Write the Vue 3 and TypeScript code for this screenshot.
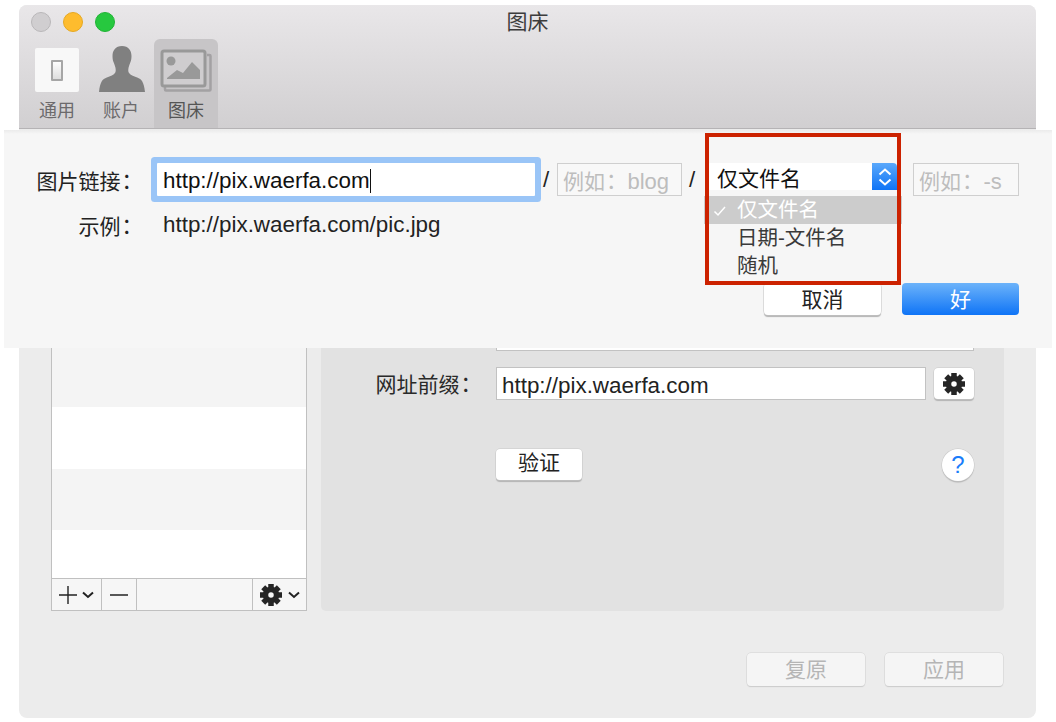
<script setup lang="ts">
const teeth = [0, 45, 90, 135, 180, 225, 270, 315]
const rows = ['a', 'b', 'c', 'd', 'e', 'f']
const menu = ['仅文件名', '日期-文件名', '随机']
</script>

<template>
  <div class="page">
    <div class="window">
      <header class="titlebar">
        <div class="title-row">
          <div class="lights">
            <span class="light grey"></span>
            <span class="light amber"></span>
            <span class="light green"></span>
          </div>
          <div class="title">图床</div>
        </div>
        <div class="tabs">
          <div class="tab">
            <div class="tab-icon">
              <div class="switch-tile"><span class="switch"></span></div>
            </div>
            <span class="tab-label">通用</span>
          </div>
          <div class="tab">
            <div class="tab-icon person">
              <svg width="46" height="46" viewBox="0 0 46 46">
                <path d="M23 0c-6.500 0-9.500 4.500-9.500 10 0 3 .5 5 1.400 7 .6 1.400 1.100 3 1.500 4.500.3 1.400.6 3.500-.1 5-1.400 2.500-5 3.500-8.500 5C3.500 33 1 36 0 46h46c-1-10-3.500-13-7.800-14.500-3.500-1.500-7.100-2.500-8.500-5-.7-1.500-.4-3.600-.1-5 .4-1.500.9-3.100 1.500-4.500.9-2 1.400-4 1.400-7C32.500 4.500 29.500 0 23 0z" fill="#808080" />
              </svg>
            </div>
            <span class="tab-label">账户</span>
          </div>
          <div class="tab active">
            <div class="tab-icon">
              <svg width="52" height="44" viewBox="0 0 52 44">
                <path d="M47 7h2.500a1 1 0 0 1 1 1v33.500a1 1 0 0 1-1 1H6a1 1 0 0 1-1-1V39" fill="none" stroke="#a3a1a3" stroke-width="2.500" />
                <rect x="2" y="3" width="43" height="35" rx="2" fill="#cfcdcf" stroke="#999" stroke-width="3" />
                <circle cx="11" cy="13" r="4.500" fill="#999" />
                <path d="M7 30l10-8 6 3 9-11 8 8v9H7z" fill="#999" />
              </svg>
            </div>
            <span class="tab-label">图床</span>
          </div>
        </div>
      </header>

      <section class="body">
        <div class="main">
          <div class="list">
            <div class="rows">
              <div v-for="r in rows" :key="r" class="row"></div>
            </div>
            <div class="list-bar">
              <div class="seg seg-add">
                <svg width="20" height="20" viewBox="0 0 20 20">
                  <path d="M10 1v18M1 10h18" stroke="#222" stroke-width="1.400" fill="none" />
                </svg>
                <svg class="chev" width="12" height="8" viewBox="0 0 12 8">
                  <path d="M1 1.500l5 4.500 5-4.500" stroke="#222" stroke-width="2" fill="none" />
                </svg>
              </div>
              <div class="seg seg-remove">
                <svg width="20" height="4" viewBox="0 0 20 4">
                  <path d="M1 2h18" stroke="#222" stroke-width="1.400" fill="none" />
                </svg>
              </div>
              <div class="seg seg-blank"></div>
              <div class="seg seg-gear">
                <svg width="24" height="24" viewBox="0 0 24 24">
                  <circle cx="12" cy="12" r="5.500" fill="none" stroke="#252525" stroke-width="5.500" />
                  <rect v-for="t in teeth" :key="t" x="9.250" y="1" width="5.500" height="5" fill="#252525" :transform="`rotate(${t} 12 12)`" />
                </svg>
                <svg class="chev" width="12" height="8" viewBox="0 0 12 8">
                  <path d="M1 1.500l5 4.500 5-4.500" stroke="#222" stroke-width="2" fill="none" />
                </svg>
              </div>
            </div>
          </div>
          <div class="panel">
            <div class="field-row">
              <span class="field-label"></span>
              <div class="field field-full"></div>
            </div>
            <div class="field-row prefix-row">
              <span class="field-label">网址前缀<span class="colon">：</span></span>
              <div class="field field-prefix">http://pix.waerfa.com</div>
              <button class="btn gear-btn">
                <svg width="24" height="24" viewBox="0 0 24 24">
                  <circle cx="12" cy="12" r="5.500" fill="none" stroke="#252525" stroke-width="5.500" />
                  <rect v-for="t in teeth" :key="t" x="9.250" y="1" width="5.500" height="5" fill="#252525" :transform="`rotate(${t} 12 12)`" />
                </svg>
              </button>
            </div>
            <div class="field-row verify-row">
              <span class="field-label"></span>
              <button class="btn verify">验证</button>
              <span class="help">?</span>
            </div>
          </div>
        </div>
        <footer class="footer">
          <button class="btn disabled">复原</button>
          <button class="btn disabled">应用</button>
        </footer>
      </section>
    </div>

    <div class="sheet">
      <div class="sheet-row first">
        <span class="sheet-label">图片链接<span class="colon">：</span></span>
        <div class="url-input">http://pix.waerfa.com<i class="caret"></i></div>
        <span class="slash">/</span>
        <div class="ph-input blog">例如<span class="colon">：</span><span class="lat">blog</span></div>
        <span class="slash second-slash">/</span>
        <div class="select">
          <span class="select-text">仅文件名</span>
          <span class="stepper">
            <svg width="14" height="24" viewBox="0 0 14 24">
              <path d="M1.500 9.500L7 4.500l5.500 5M1.500 14.500L7 19.500l5.500-5" stroke="#fff" stroke-width="2" fill="none" />
            </svg>
          </span>
          <div class="menu">
            <div v-for="(m, i) in menu" :key="m" class="menu-item" :class="{ selected: i === 0 }">
              <svg v-if="i === 0" class="check" width="14" height="12" viewBox="0 0 14 12">
                <path d="M1.500 6.500l3.500 3.500 7-8" stroke="#fff" stroke-width="1.500" fill="none" />
              </svg>
              {{ m }}
            </div>
          </div>
        </div>
        <div class="ph-input suffix">例如<span class="colon">：</span><span class="lat">-s</span></div>
      </div>
      <div class="sheet-row second">
        <span class="sheet-label">示例<span class="colon">：</span></span>
        <span class="sample">http://pix.waerfa.com/pic.jpg</span>
      </div>
      <div class="sheet-actions">
        <button class="btn cancel">取消</button>
        <button class="btn ok">好</button>
      </div>
      <div class="annotation"></div>
    </div>
  </div>
</template>

<style>
html, body { margin: 0; background: #fff; }
</style>

<style scoped>
* { box-sizing: border-box; }
.page {
  position: relative;
  width: 1056px;
  height: 722px;
  overflow: hidden;
  padding: 5px 20px 4px 19px;
  background: #fff;
  font-family: "Liberation Sans", "Noto Sans CJK SC", sans-serif;
  color: #222;
}
.window {
  display: flex;
  flex-direction: column;
  height: 713px;
  border-radius: 8px;
  overflow: hidden;
  background: #ececec;
}
.titlebar {
  height: 124px;
  flex: none;
  background: linear-gradient(#e9e7e9, #d1cfd1);
  border-bottom: 1px solid #b5b3b5;
}
.title-row { position: relative; height: 34px; }
.lights { position: absolute; left: 12px; top: 7px; display: flex; gap: 12px; }
.light { width: 20px; height: 20px; border-radius: 50%; }
.grey { background: #d0ced0; border: 1px solid #b9b7b9; }
.amber { background: #febc2e; border: 1px solid #e5a823; }
.green { background: #27c83f; border: 1px solid #20b335; }
.title { text-align: center; font-size: 21px; line-height: 34px; color: #3c3c3c; }
.tabs { display: flex; padding-left: 6px; }
.tab {
  width: 64px;
  height: 89px;
  border-radius: 6px 6px 0 0;
  display: flex;
  flex-direction: column;
  align-items: center;
}
.tab.active { background: #c7c5c7; margin-left: 1px; }
.tab-icon { height: 53px; display: flex; align-items: flex-end; justify-content: center; }
.person { padding-left: 2px; }
.tab-label { font-size: 18px; line-height: 22px; margin-top: 8px; color: #6c6a6c; }
.active .tab-label { color: #555; }
.switch-tile {
  width: 44px;
  height: 44px;
  background: #f8f8f8;
  border-radius: 2px;
  display: flex;
  align-items: center;
  justify-content: center;
}
.switch {
  width: 12px;
  height: 21px;
  border: 2px solid #a6a6a6;
  border-radius: 1px;
  background: linear-gradient(#fdfdfd, #dedede);
}
.body { flex: 1; display: flex; flex-direction: column; padding: 12px 32px 32px; min-height: 0; }
.main { flex: 1; display: flex; gap: 14px; min-height: 0; }
.list {
  width: 256px;
  display: flex;
  flex-direction: column;
  border: 1.500px solid #c0c0c0;
  background: #fff;
}
.rows { flex: 1; display: flex; flex-direction: column; justify-content: flex-end; overflow: hidden; min-height: 0; }
.row { height: 61.500px; flex: none; background: #fff; }
.row:last-child { height: 48px; }
.row:nth-last-child(2), .row:nth-last-child(4), .row:nth-last-child(6) { background: #f4f4f4; }
.list-bar {
  height: 32px;
  flex: none;
  display: flex;
  border-top: 1.500px solid #c0c0c0;
  background: #f6f6f6;
}
.seg { display: flex; align-items: center; }
.seg + .seg { border-left: 1.500px solid #c0c0c0; }
.seg-add { width: 49px; padding-left: 6px; gap: 4px; }
.seg-remove { width: 35px; padding-left: 7px; }
.seg-blank { flex: 1; }
.seg-gear { width: 54px; padding-left: 6px; gap: 5px; }
.panel {
  flex: 1;
  background: #e2e2e2;
  border-radius: 5px;
  padding: 177px 30px 0 0;
  display: flex;
  flex-direction: column;
}
.field-row { display: flex; align-items: center; }
.field-label { width: 175px; flex: none; padding-right: 25px; text-align: right; font-size: 21px; line-height: 28px; color: #2a2a2a; }
.colon { font-family: "Noto Sans CJK TC", sans-serif; font-feature-settings: "halt"; margin-left: 1px; }
.lat { font-size: 22px; }
.field {
  height: 33px;
  background: #fff;
  border: 1.500px solid #c2c2c2;
  font-size: 22.400px;
  line-height: 35px;
  padding-left: 5px;
  color: #222;
}
.field-full { flex: 1; }
.prefix-row { margin-top: 16px; }
.field-prefix { width: 430px; }
.btn {
  font-family: inherit;
  padding: 0 0 3px;
  border: none;
  border-radius: 4px;
  background: #fff;
  color: #222;
  font-size: 21px;
  box-shadow: 0 0 0 .5px #c8c8c8, 0 1.500px 1px #b4b4b4;
}
.gear-btn {
  width: 40px;
  height: 31px;
  margin-left: 8px;
  padding: 0;
  display: flex;
  align-items: center;
  justify-content: center;
}
.verify-row { margin-top: 47px; }
.verify { width: 86px; height: 31px; line-height: 28px; }
.help {
  margin-left: auto;
  margin-top: 2px;
  width: 32px;
  height: 32px;
  border-radius: 50%;
  background: #fff;
  color: #1a7dfa;
  text-align: center;
  font-size: 24px;
  line-height: 32px;
  box-shadow: 0 0 0 .5px #c8c8c8, 0 1.500px 1px #b4b4b4;
}
.footer {
  flex: none;
  display: flex;
  justify-content: flex-end;
  gap: 20px;
  margin-top: 42px;
  padding-right: 1px;
}
.disabled {
  width: 118px;
  height: 33px;
  padding-bottom: 5px;
  background: #f5f5f5;
  color: #b5b5b5;
  box-shadow: 0 0 0 .5px #d2d2d2, 0 1px 1px #c8c8c8;
}
.sheet {
  position: absolute;
  left: 4px;
  top: 130px;
  width: 1048px;
  height: 218px;
  background: linear-gradient(#ebebeb, #f6f6f6 4px);
  display: flex;
  flex-direction: column;
  padding-top: 33px;
}
.sheet-row { display: flex; align-items: center; font-size: 21px; }
.first { height: 33px; }
.sheet-label { width: 128px; flex: none; text-align: right; color: #222; }
.url-input {
  margin-left: 25px;
  width: 378px;
  height: 33px;
  background: #fff;
  border-radius: 1px;
  box-shadow: 0 0 0 6px #9ac5f7;
  padding-left: 6px;
  padding-top: 2px;
  display: flex;
  align-items: center;
  font-size: 22.400px;
  color: #111;
}
.caret { width: 1.500px; height: 24px; background: #111; }
.slash { width: 22px; text-align: center; font-size: 22.400px; color: #222; }
.ph-input {
  height: 33px;
  border: 1.500px solid #cfcfcf;
  background: #f8f8f8;
  color: #bdbdbd;
  padding-left: 5px;
  line-height: 33px;
  font-size: 21px;
  white-space: nowrap;
}
.ph-input .colon { margin-right: 11px; }
.blog { width: 125px; }
.second-slash { width: 20px; margin-right: 5px; }
.select {
  position: relative;
  width: 190px;
  height: 27px;
  margin-top: -6px;
  background: #fff;
  display: flex;
  border-radius: 4px;
}
.select-text { flex: 1; padding-left: 10px; line-height: 31px; color: #111; }
.stepper {
  width: 25px;
  background: linear-gradient(#5aa8fb, #0f74f6);
  border-radius: 0 4px 0 0;
  display: flex;
  align-items: center;
  justify-content: center;
}
.menu {
  position: absolute;
  left: -3px;
  top: 33px;
  width: 198px;
}
.menu-item {
  position: relative;
  height: 28px;
  line-height: 28px;
  padding-left: 33px;
  font-size: 20.500px;
  color: #3a3a3a;
}
.selected { background: #cccccc; color: #fff; }
.check { position: absolute; left: 9px; top: 9px; }
.suffix { width: 106px; margin-left: 16px; }
.second { margin-top: 13px; height: 32px; }
.sample { margin-left: 31px; font-size: 22.400px; color: #222; }
.sheet-actions {
  margin-top: auto;
  margin-bottom: 33px;
  display: flex;
  justify-content: flex-end;
  gap: 21px;
  padding-right: 33px;
}
.cancel, .ok { width: 117px; height: 32px; }
.ok { background: linear-gradient(#6cb3fa, #0f74f6); color: #fff; box-shadow: none; }
.annotation {
  position: absolute;
  left: 701px;
  top: 3px;
  width: 196px;
  height: 152px;
  border: 4px solid #cc2200;
  pointer-events: none;
}
</style>
